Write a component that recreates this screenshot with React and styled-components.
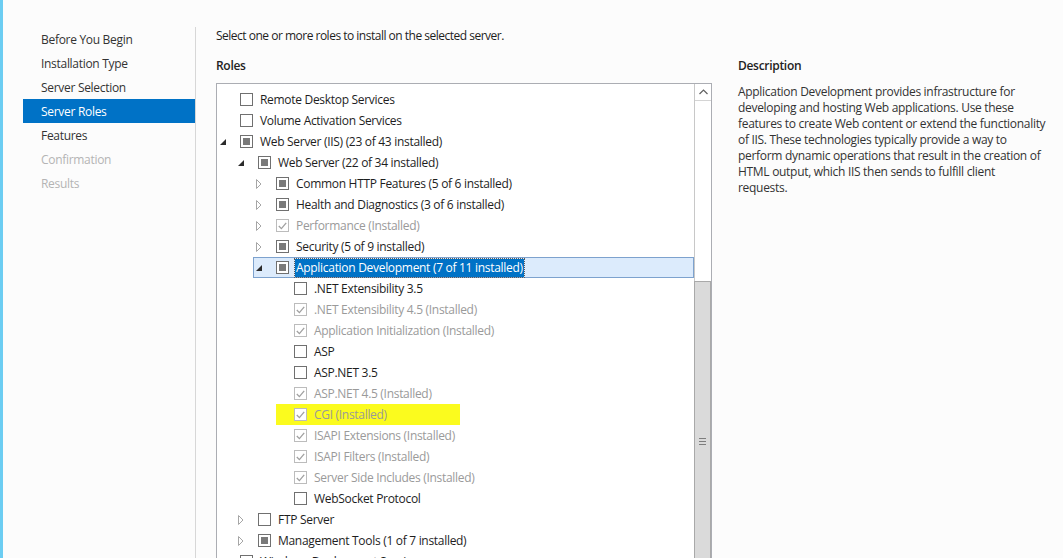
import React from 'react';
import styled, { createGlobalStyle } from 'styled-components';

const GlobalStyle = createGlobalStyle`
  html, body {
    margin: 0;
    padding: 0;
    background: #fcfcfc;
    overflow: hidden;
  }
  body {
    font-family: "Open Sans", "Liberation Sans", sans-serif;
    font-size: 12px;
    letter-spacing: -0.3px;
    color: #1e1e1e;
  }
`;

const Page = styled.div`
  display: flex;
  width: 1063px;
  height: 558px;
  overflow: hidden;
  background: #fcfcfc;
`;

const Stripe = styled.div`
  width: 3px;
  flex-shrink: 0;
  background: #6ccdf2;
`;

const Nav = styled.ul`
  list-style: none;
  margin: 0;
  padding: 27px 0 0 20px;
  width: 172px;
  flex-shrink: 0;
`;

const NavItem = styled.li`
  height: 24px;
  box-sizing: border-box;
  padding: 2px 0 0 18px;
  line-height: 22px;
  color: ${p => (p.$active ? '#fff' : p.$disabled ? '#b4b4b4' : '#333')};
  background: ${p => (p.$active ? '#0072c6' : 'transparent')};
`;

const Main = styled.div`
  flex: 1;
  margin-top: 27px;
  border-left: 1px solid #d7d7d7;
  padding-left: 20px;
`;

const Intro = styled.div`
  line-height: 16px;
  padding-top: 1px;
  letter-spacing: -0.5px;
  color: #1e1e1e;
`;

const Columns = styled.div`
  display: flex;
  gap: 26px;
  margin-top: 14px;
`;

const RolesColumn = styled.div`
  width: 496px;
  flex-shrink: 0;
`;

const DescColumn = styled.div`
  width: 316px;
`;

const Heading = styled.div`
  font-weight: 600;
  line-height: 16px;
  color: #222;
`;

const Box = styled.div`
  display: flex;
  margin-top: 9px;
  height: 500px;
  border: 1px solid #abadb3;
  border-bottom: none;
  background: #fff;
`;

const List = styled.div`
  flex: 1;
  padding-top: 5px;
  overflow: hidden;
`;

const Row = styled.div`
  display: flex;
  height: 21px;
  padding-left: ${p => p.$level * 18}px;
`;

const Item = styled.div`
  flex: 1;
  display: flex;
  align-items: center;
  border: 1px solid ${p => (p.$selected ? '#7da2ce' : 'transparent')};
  background: ${p =>
    p.$selected
      ? '#dcebfc'
      : p.$marked
      ? 'linear-gradient(to right, transparent 4px, #fbfb1e 4px, #fbfb1e 188px, transparent 188px)'
      : 'transparent'};
`;

const Expander = styled.span`
  width: 22px;
  flex-shrink: 0;
  display: flex;
  align-items: center;
  padding-left: 2px;
  box-sizing: border-box;
`;

const Check = styled.span`
  width: 13px;
  height: 13px;
  box-sizing: border-box;
  flex-shrink: 0;
  display: flex;
  align-items: center;
  justify-content: center;
  border: 1px solid ${p => (p.$disabled ? '#bcbcbc' : '#707070')};
  background: #fff;
`;

const Mixed = styled.span`
  width: 7px;
  height: 7px;
  background: #7a7a7a;
`;

const Label = styled.span`
  margin-left: ${p => (p.$selected ? 6 : 7)}px;
  padding: 0 ${p => (p.$selected ? 1 : 0)}px;
  line-height: 18px;
  white-space: nowrap;
  color: ${p => (p.$selected ? '#fff' : p.$disabled ? '#9a9a9a' : '#1e1e1e')};
  background: ${p => (p.$selected ? '#0072c6' : 'transparent')};
  outline: ${p => (p.$selected ? '1px dotted #5a5a5a' : 'none')};
`;

const ScrollBar = styled.div`
  width: 16px;
  flex-shrink: 0;
  display: flex;
  flex-direction: column;
  border-left: 1px solid #c8c8c8;
  background: #fff;
`;

const ArrowButton = styled.div`
  height: 16px;
  display: flex;
  align-items: center;
  justify-content: center;
  border-bottom: 1px solid #d4d4d4;
`;

const Track = styled.div`
  height: 180px;
`;

const Thumb = styled.div`
  flex: 1;
  display: flex;
  justify-content: center;
  padding-top: 156px;
  background: #dadada;
  border-left: 1px solid #a9a9a9;
  border-right: 1px solid #a9a9a9;
  border-top: 1px solid #a9a9a9;
  margin-left: -1px;
`;

const Grip = styled.div`
  width: 7px;
  height: 7px;
  background: repeating-linear-gradient(to bottom, #7d7d7d 0, #7d7d7d 1px, transparent 1px, transparent 3px);
`;

const DescText = styled.p`
  margin: 10px 0 0;
  line-height: 16px;
  white-space: nowrap;
  color: #333;
`;

const navItems = [
  { label: 'Before You Begin' },
  { label: 'Installation Type' },
  { label: 'Server Selection' },
  { label: 'Server Roles', active: true },
  { label: 'Features' },
  { label: 'Confirmation', disabled: true },
  { label: 'Results', disabled: true },
];

// state: empty | mixed | done (installed, greyed)
const roles = [
  { level: 0, label: 'Remote Desktop Services', state: 'empty' },
  { level: 0, label: 'Volume Activation Services', state: 'empty' },
  { level: 0, label: 'Web Server (IIS) (23 of 43 installed)', state: 'mixed', open: true },
  { level: 1, label: 'Web Server (22 of 34 installed)', state: 'mixed', open: true },
  { level: 2, label: 'Common HTTP Features (5 of 6 installed)', state: 'mixed', open: false },
  { level: 2, label: 'Health and Diagnostics (3 of 6 installed)', state: 'mixed', open: false },
  { level: 2, label: 'Performance (Installed)', state: 'done', open: false },
  { level: 2, label: 'Security (5 of 9 installed)', state: 'mixed', open: false },
  { level: 2, label: 'Application Development (7 of 11 installed)', state: 'mixed', open: true, selected: true },
  { level: 3, label: '.NET Extensibility 3.5', state: 'empty' },
  { level: 3, label: '.NET Extensibility 4.5 (Installed)', state: 'done' },
  { level: 3, label: 'Application Initialization (Installed)', state: 'done' },
  { level: 3, label: 'ASP', state: 'empty' },
  { level: 3, label: 'ASP.NET 3.5', state: 'empty' },
  { level: 3, label: 'ASP.NET 4.5 (Installed)', state: 'done' },
  { level: 3, label: 'CGI (Installed)', state: 'done', marked: true },
  { level: 3, label: 'ISAPI Extensions (Installed)', state: 'done' },
  { level: 3, label: 'ISAPI Filters (Installed)', state: 'done' },
  { level: 3, label: 'Server Side Includes (Installed)', state: 'done' },
  { level: 3, label: 'WebSocket Protocol', state: 'empty' },
  { level: 1, label: 'FTP Server', state: 'empty', open: false },
  { level: 1, label: 'Management Tools (1 of 7 installed)', state: 'mixed', open: false },
  { level: 0, label: 'Windows Deployment Services', state: 'empty' },
];

const descLines = [
  'Application Development provides infrastructure for',
  'developing and hosting Web applications. Use these',
  'features to create Web content or extend the functionality',
  'of IIS. These technologies typically provide a way to',
  'perform dynamic operations that result in the creation of',
  'HTML output, which IIS then sends to fulfill client',
  'requests.',
];

function Toggle({ open }) {
  if (open === undefined) return null;
  if (open) {
    return (
      <svg width="6" height="6" viewBox="0 0 6 6">
        <path d="M6 0 L6 6 L0 6 Z" fill="#2b2b2b" />
      </svg>
    );
  }
  return (
    <svg width="6" height="10" viewBox="0 0 6 10">
      <path d="M0.5 0.5 L5 5 L0.5 9.5 Z" fill="none" stroke="#a6a6a6" />
    </svg>
  );
}

function CheckBox({ state }) {
  return (
    <Check $disabled={state === 'done'}>
      {state === 'mixed' && <Mixed />}
      {state === 'done' && (
        <svg width="9" height="8" viewBox="0 0 9 8">
          <path d="M0.8 4 L3.4 6.6 L8.2 0.8" fill="none" stroke="#a0a0a0" strokeWidth="1.3" />
        </svg>
      )}
    </Check>
  );
}

function App() {
  return (
    <Page>
      <GlobalStyle />
      <Stripe />
      <Nav>
        {navItems.map(n => (
          <NavItem key={n.label} $active={n.active} $disabled={n.disabled}>
            {n.label}
          </NavItem>
        ))}
      </Nav>
      <Main>
        <Intro>Select one or more roles to install on the selected server.</Intro>
        <Columns>
          <RolesColumn>
            <Heading>Roles</Heading>
            <Box>
              <List>
                {roles.map(r => (
                  <Row key={r.label} $level={r.level}>
                    <Item $selected={r.selected} $marked={r.marked}>
                      <Expander>
                        <Toggle open={r.open} />
                      </Expander>
                      <CheckBox state={r.state} />
                      <Label $selected={r.selected} $disabled={r.state === 'done'}>
                        {r.label}
                      </Label>
                    </Item>
                  </Row>
                ))}
              </List>
              <ScrollBar>
                <ArrowButton>
                  <svg width="9" height="6" viewBox="0 0 9 6">
                    <path d="M0.5 5 L4.5 1 L8.5 5" fill="none" stroke="#606060" strokeWidth="1.2" />
                  </svg>
                </ArrowButton>
                <Track />
                <Thumb>
                  <Grip />
                </Thumb>
              </ScrollBar>
            </Box>
          </RolesColumn>
          <DescColumn>
            <Heading>Description</Heading>
            <DescText>
              {descLines.map((line, i) => (
                <React.Fragment key={i}>
                  {line}
                  {i < descLines.length - 1 && <br />}
                </React.Fragment>
              ))}
            </DescText>
          </DescColumn>
        </Columns>
      </Main>
    </Page>
  );
}

export default App;
